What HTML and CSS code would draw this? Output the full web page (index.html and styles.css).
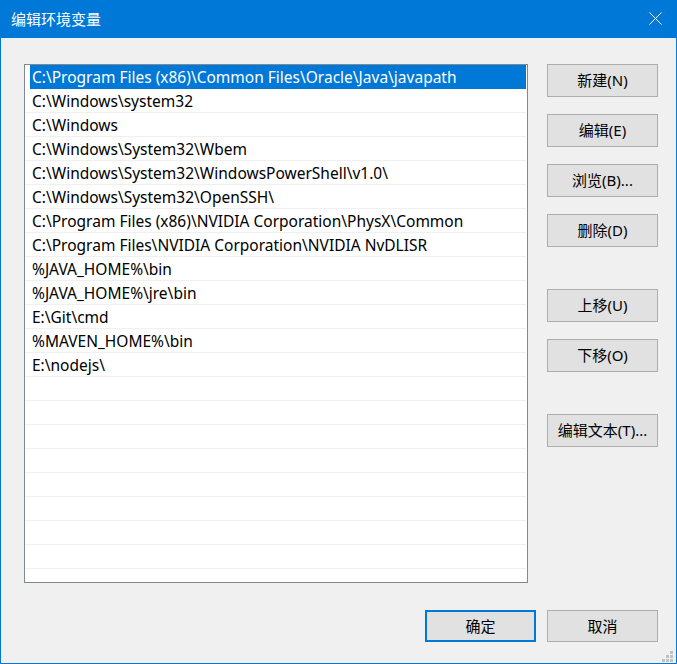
FILE: index.html
```html
<!DOCTYPE html>
<html lang="zh-CN">
  <head>
    <meta charset="UTF-8" />
    <title>编辑环境变量</title>
    <link rel="stylesheet" href="styles.css">
  </head>
  <body>
    <div class="window">
      <!-- Title bar -->
      <div class="titlebar">
        <span class="title">编辑环境变量</span>
        <svg class="close" width="13" height="13" viewBox="0 0 13 13">
          <path d="M0.5 0.5 L12.5 12.5 M12.5 0.5 L0.5 12.5" stroke="#fff" stroke-width="1" fill="none" />
        </svg>
      </div>

      <div class="content">
        <div class="main">
          <ul class="list">
            <li class="selected">C:\Program Files (x86)\Common Files\Oracle\Java\javapath</li>
            <li>C:\Windows\system32</li>
            <li>C:\Windows</li>
            <li>C:\Windows\System32\Wbem</li>
            <li>C:\Windows\System32\WindowsPowerShell\v1.0\</li>
            <li>C:\Windows\System32\OpenSSH\</li>
            <li>C:\Program Files (x86)\NVIDIA Corporation\PhysX\Common</li>
            <li>C:\Program Files\NVIDIA Corporation\NVIDIA NvDLISR</li>
            <li>%JAVA_HOME%\bin</li>
            <li>%JAVA_HOME%\jre\bin</li>
            <li>E:\Git\cmd</li>
            <li>%MAVEN_HOME%\bin</li>
            <li>E:\nodejs\</li>
            <li></li>
            <li></li>
            <li></li>
            <li></li>
            <li></li>
            <li></li>
            <li></li>
            <li></li>
            <li></li>
          </ul>

          <div class="side">
            <button class="btn">新建(N)</button>
            <button class="btn">编辑(E)</button>
            <button class="btn">浏览(B)...</button>
            <button class="btn">删除(D)</button>
            <button class="btn group">上移(U)</button>
            <button class="btn">下移(O)</button>
            <button class="btn group">编辑文本(T)...</button>
          </div>
        </div>

        <!-- Dialog buttons -->
        <div class="footer">
          <button class="btn default">确定</button>
          <button class="btn">取消</button>
        </div>
      </div>

      <svg class="grip" width="11" height="11" viewBox="0 0 11 11">
        <rect x="8" y="0" width="3" height="3" />
        <rect x="4" y="4" width="3" height="3" />
        <rect x="8" y="4" width="3" height="3" />
        <rect x="0" y="8" width="3" height="3" />
        <rect x="4" y="8" width="3" height="3" />
        <rect x="8" y="8" width="3" height="3" />
      </svg>
    </div>
  </body>
</html>
```

FILE: styles.css
```css
body {
  margin: 0;
  padding: 0;
  font-family: "Noto Sans", "Noto Sans CJK SC", sans-serif;
  font-size: 15.5px;
  color: #000;
}

.window {
  position: relative;
  box-sizing: border-box;
  width: 677px;
  height: 664px;
  border: 1px solid #0078d7;
  background: #f0f0f0;
}

/* Title bar */
.titlebar {
  height: 37px;
  background: #0078d7;
  display: flex;
  align-items: center;
  justify-content: space-between;
  padding: 0 14px 1px 10px;
  margin-top: -1px;
}

.title {
  color: #fff;
  font-size: 15px;
}

.close {
  display: block;
}

.content {
  padding: 26px 18px 0 23px;
}

.main {
  display: flex;
  gap: 19px;
}

/* List */
.list {
  list-style: none;
  margin: 0;
  padding: 0;
  width: 502px;
  height: 517px;
  overflow: hidden;
  background: #fff;
  border: 1px solid #828790;
}

.list li {
  box-sizing: border-box;
  height: 24px;
  line-height: 24px;
  padding-left: 7px;
  margin-right: 1px;
  border-bottom: 1px solid #f0f0f0;
  white-space: nowrap;
}

.list li.selected {
  margin-left: 5px;
  padding-left: 2px;
  background: #0078d7;
  border-bottom-color: #0078d7;
  color: #fff;
}

/* Buttons */
.side {
  display: flex;
  flex-direction: column;
  gap: 17px;
}

.side .group {
  margin-top: 25px;
}

.btn {
  box-sizing: border-box;
  width: 111px;
  height: 33px;
  padding: 0 0 2px;
  background: #e1e1e1;
  border: 1px solid #adadad;
  font-family: inherit;
  font-size: 15px;
  color: #000;
}

.footer {
  display: flex;
  justify-content: flex-end;
  gap: 11px;
  margin-top: 27px;
}

.footer .btn {
  height: 32px;
}

.btn.default {
  border: 2px solid #0078d7;
}

.grip {
  position: absolute;
  right: 3px;
  bottom: 1px;
  fill: #c2c2c2;
}
```
